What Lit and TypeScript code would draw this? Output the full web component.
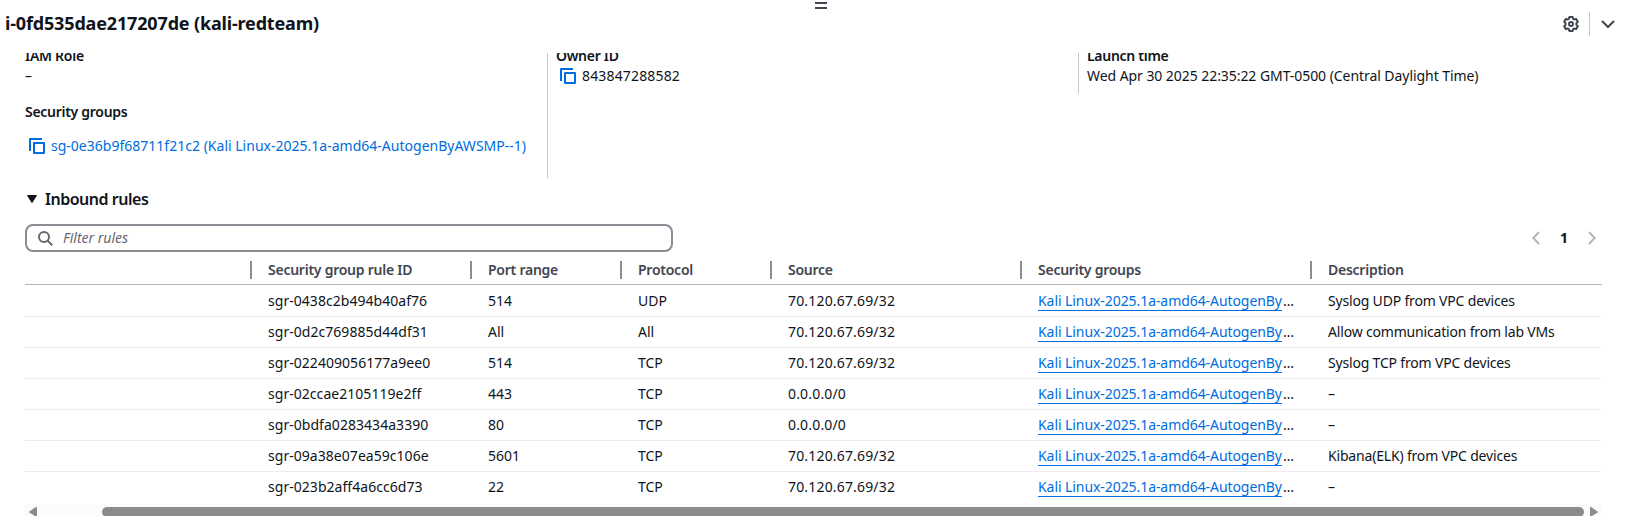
import { LitElement, html, css, svg } from 'lit';
import { customElement } from 'lit/decorators.js';

interface Rule {
  id: string;
  port: string;
  protocol: string;
  source: string;
  description: string;
}

const RULES: Rule[] = [
  { id: 'sgr-0438c2b494b40af76', port: '514', protocol: 'UDP', source: '70.120.67.69/32', description: 'Syslog UDP from VPC devices' },
  { id: 'sgr-0d2c769885d44df31', port: 'All', protocol: 'All', source: '70.120.67.69/32', description: 'Allow communication from lab VMs' },
  { id: 'sgr-022409056177a9ee0', port: '514', protocol: 'TCP', source: '70.120.67.69/32', description: 'Syslog TCP from VPC devices' },
  { id: 'sgr-02ccae2105119e2ff', port: '443', protocol: 'TCP', source: '0.0.0.0/0', description: '–' },
  { id: 'sgr-0bdfa0283434a3390', port: '80', protocol: 'TCP', source: '0.0.0.0/0', description: '–' },
  { id: 'sgr-09a38e07ea59c106e', port: '5601', protocol: 'TCP', source: '70.120.67.69/32', description: 'Kibana(ELK) from VPC devices' },
  { id: 'sgr-023b2aff4a6cc6d73', port: '22', protocol: 'TCP', source: '70.120.67.69/32', description: '–' },
];

const COLUMNS = ['Security group rule ID', 'Port range', 'Protocol', 'Source', 'Security groups', 'Description'];

const copyIcon = html`<svg class="copy" width="16" height="16" viewBox="0 0 16 16" fill="none" stroke="currentColor" stroke-width="2">
  ${svg`<path d="M1 13V1h12" stroke-linejoin="round"/><rect x="5" y="5" width="10" height="10" stroke-linejoin="round"/>`}
</svg>`;

@customElement('app-root')
export class AppRoot extends LitElement {
  static styles = css`
    :host {
      display: flex;
      flex-direction: column;
      height: 516px;
      overflow: hidden;
      background: #fff;
      color: #0f141a;
      font: 400 14px/20px 'Noto Sans', 'Open Sans', sans-serif;
      white-space: nowrap;
    }
    * { box-sizing: border-box; }
    svg { display: block; flex: none; }
    .handle {
      width: 12px;
      height: 7px;
      margin: 2px 0 0 815px;
      border: solid #424650;
      border-width: 2px 0;
      flex: none;
    }
    .header {
      height: 44px;
      flex: none;
      display: flex;
      align-items: flex-start;
      padding: 2px 11px 0 5px;
    }
    .title { margin: 0; font-size: 18px; line-height: 24px; font-weight: 700; letter-spacing: -0.16px; flex: 1; }
    .tools { display: flex; align-items: center; height: 24px; margin-top: 1px; color: #424650; }
    .bar { width: 1px; height: 24px; background: #c6c6cd; margin: 0 11px 0 10px; }
    .scroll { flex: 1; overflow: hidden; padding: 0 24px 0 25px; min-height: 0; }
    .details { display: grid; grid-template-columns: 522px 531px 1fr; height: 125px; align-items: start; }
    .col { padding-left: 8px; border-left: 1px solid #c6c6cd; height: 125px; }
    .col.first { border: 0; padding: 0; }
    .col.short { height: 41px; }
    .label { font-weight: 600; letter-spacing: -0.28px; line-height: 20px; }
    .label.clipped { margin-top: -7px; }
    .label.groups { margin-top: 16px; }
    .value { display: flex; letter-spacing: -0.06px; }
    .copyable { padding-left: 4px; gap: 6px; letter-spacing: 0.16px; }
    .copy { color: #006ce0; margin-top: 2px; }
    .grouplink { margin-top: 14px; padding-left: 4px; gap: 6px; letter-spacing: 0.01px; color: #006ce0; }
    .section {
      display: flex;
      align-items: center;
      gap: 8px;
      margin: 11px 0 0;
      padding-left: 2px;
      font-size: 16px;
      line-height: 20px;
      font-weight: 600;
      letter-spacing: -0.48px;
    }
    .toolbar { display: flex; justify-content: space-between; margin-top: 15px; height: 28px; }
    .filter {
      width: 648px;
      border: 2px solid #8c8c94;
      border-radius: 8px;
      display: flex;
      align-items: center;
      padding-left: 11px;
      gap: 10px;
      color: #656871;
      font-style: italic;
    }
    .pager { display: flex; align-items: center; padding-right: 6px; color: #b4b4bb; }
    .page { width: 48px; text-align: center; font-weight: 700; color: #0f141a; }
    .row {
      display: grid;
      grid-template-columns: 225px 220px 150px 150px 250px 290px 1fr;
      height: 31px;
      width: 1576px;
      border-bottom: 1px solid #ebebf0;
    }
    .cell { padding: 5px 0 0 18px; }
    .head { height: 33px; width: 1577px; border-color: #b4b4bb; color: #424650; font-weight: 600; letter-spacing: -0.25px; }
    .head .cell { position: relative; padding-top: 8px; }
    .head .cell::before {
      content: '';
      position: absolute;
      left: 0;
      top: 9px;
      width: 2px;
      height: 18px;
      background: #8c8c94;
    }
    .row.body1 { height: 32px; padding-top: 1px; }
    .row.last { border: 0; }
    .id { letter-spacing: 0.04px; }
    .source { letter-spacing: 0.17px; }
    .desc { letter-spacing: -0.18px; }
    .sg { letter-spacing: -0.07px; }
    .link { display: inline-block; height: 20px; margin-right: 1px; color: #006ce0; border-bottom: 1px solid #006ce0; }
    .hscroll {
      display: flex;
      width: 1577px;
      height: 12px;
      margin-top: 1px;
      padding: 3px 4px 0;
      background: #fbfbfb;
      color: #8b8b8b;
    }
    .thumb { width: 1482px; height: 10px; margin: 0 6px 0 65px; border-radius: 5px; background: #8b8b8b; flex: none; }
  `;

  private renderRow(r: Rule, i: number) {
    const extra = i === 0 ? 'body1' : i === RULES.length - 1 ? 'last' : '';
    return html`<div class="row ${extra}">
      <div></div>
      <div class="cell id">${r.id}</div>
      <div class="cell">${r.port}</div>
      <div class="cell">${r.protocol}</div>
      <div class="cell source">${r.source}</div>
      <div class="cell sg"><span class="link">Kali Linux-2025.1a-amd64-AutogenBy</span>…</div>
      <div class="cell desc">${r.description}</div>
    </div>`;
  }

  render() {
    return html`
      <div class="handle"></div>
      <div class="header">
        <h2 class="title">i-0fd535dae217207de (kali-redteam)</h2>
        <div class="tools">
          <svg width="16" height="16" viewBox="0 0 16 16" fill="none" stroke="currentColor" stroke-width="2" stroke-linejoin="round">
            <path d="M6.4 1h3.2l.6 1.9 1 .6 2-.5 1.6 2.8L13.4 7.3v1.4l1.4 1.5-1.6 2.8-2-.5-1 .6-.6 1.9H6.4l-.6-1.9-1-.6-2 .5-1.6-2.8 1.4-1.5V7.3L1.2 5.8 2.8 3l2 .5 1-.6z"/>
            <circle cx="8" cy="8" r="2"/>
          </svg>
          <div class="bar"></div>
          <svg width="14" height="10" viewBox="0 0 14 10" fill="none" stroke="currentColor" stroke-width="2"><path d="M1 2l6 6 6-6"/></svg>
        </div>
      </div>
      <div class="scroll">
        <div class="details">
          <div class="col first">
            <div class="label clipped">IAM Role</div>
            <div class="value">–</div>
            <div class="label groups">Security groups</div>
            <div class="value grouplink">${copyIcon}<span>sg-0e36b9f68711f21c2 (Kali Linux-2025.1a-amd64-AutogenByAWSMP--1)</span></div>
          </div>
          <div class="col">
            <div class="label clipped">Owner ID</div>
            <div class="value copyable">${copyIcon}<span>843847288582</span></div>
          </div>
          <div class="col short">
            <div class="label clipped">Launch time</div>
            <div class="value">Wed Apr 30 2025 22:35:22 GMT-0500 (Central Daylight Time)</div>
          </div>
        </div>
        <h3 class="section">
          <svg width="10" height="8" viewBox="0 0 10 8"><path d="M0.6 0h8.8q.8 0 .4.8L5.6 7.4q-.6.8-1.2 0L.2.8Q-.2 0 .6 0z" fill="currentColor"/></svg>
          Inbound rules
        </h3>
        <div class="toolbar">
          <div class="filter">
            <svg width="15" height="15" viewBox="0 0 15 15" fill="none" stroke="currentColor" stroke-width="2"><circle cx="6" cy="6" r="5"/><path d="M9.6 9.6l4.6 4.6"/></svg>
            Filter rules
          </div>
          <div class="pager">
            <svg width="8" height="14" viewBox="0 0 8 14" fill="none" stroke="currentColor" stroke-width="2"><path d="M7 1L1.3 7 7 13"/></svg>
            <div class="page">1</div>
            <svg width="8" height="14" viewBox="0 0 8 14" fill="none" stroke="currentColor" stroke-width="2"><path d="M1 1l5.7 6L1 13"/></svg>
          </div>
        </div>
        <div class="row head">
          <div></div>
          ${COLUMNS.map((c) => html`<div class="cell">${c}</div>`)}
        </div>
        ${RULES.map((r, i) => this.renderRow(r, i))}
        <div class="hscroll">
          <svg width="8" height="9" viewBox="0 0 8 9"><path d="M8 0v9H6L.4 5.6q-.6-.6 0-1.2L6.6.2z" fill="currentColor"/></svg>
          <div class="thumb"></div>
          <svg width="8" height="9" viewBox="0 0 8 9"><path d="M0 0v9h2l5.6-3.4q.6-.6 0-1.2L1.4.2z" fill="currentColor"/></svg>
        </div>
      </div>
    `;
  }
}
